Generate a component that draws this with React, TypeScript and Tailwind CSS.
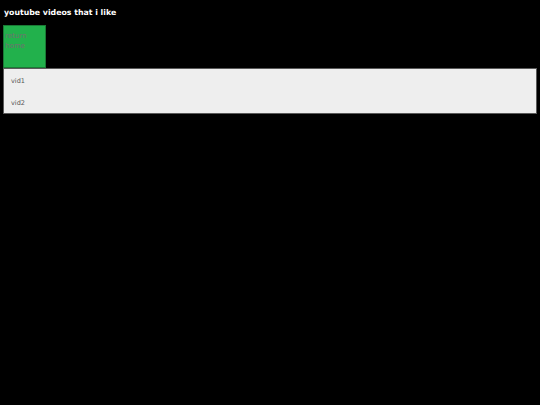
export default function App() {
  return (
    <div className="min-h-[405px] bg-black text-white" style={{ fontFamily: '"DejaVu Sans", sans-serif' }}>
      <h1 className="px-[4px] pt-[8px] h-[25px] text-[7.8px] leading-[10px] font-bold text-white">
        youtube videos that i like
      </h1>
      <div className="ml-[3px] w-[43px] h-[43px] bg-[#22b14c] border border-[#1a7a35] px-[1px] pt-[5px] text-[7px] leading-[10px] text-[#707070]">
        return
        <br />
        home
      </div>
      <ul className="mx-[3px] bg-[#eeeeee] border border-[#5a5a5a]">
        <li className="h-[22px] pl-[7px] pt-[4px] flex items-center text-[6.5px] text-[#555555]">vid1</li>
        <li className="h-[22px] pl-[7px] pt-[4px] flex items-center text-[6.5px] text-[#555555]">vid2</li>
      </ul>
    </div>
  )
}
